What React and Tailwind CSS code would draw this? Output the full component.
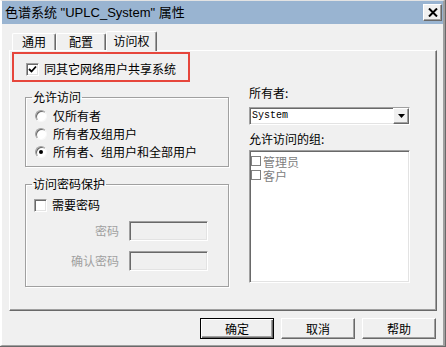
import { useState } from "react";

function CheckBox({ checked, onChange }) {
  return (
    <span
      onClick={onChange}
      className="w-[13px] h-[13px] shrink-0 bg-white border border-t-[#a0a0a0] border-l-[#a0a0a0] border-r-white border-b-white shadow-[inset_1px_1px_0_#696969,inset_-1px_-1px_0_#e3e3e3] flex items-center justify-center"
    >
      {checked && (
        <svg width="9" height="9" viewBox="0 0 9 9">
          <path d="M1 4 L3.5 6.5 L8 1.5" fill="none" stroke="#000" strokeWidth="1.8" />
        </svg>
      )}
    </span>
  );
}

function Radio({ checked, label, onClick }) {
  return (
    <div className="h-[18px] flex items-center gap-[6px] pl-[9px]" onClick={onClick}>
      <span className="w-[12px] h-[12px] rounded-full bg-white border border-t-[#a0a0a0] border-l-[#a0a0a0] border-r-[#f8f8f8] border-b-[#f8f8f8] shadow-[inset_1px_1px_0_#696969] flex items-center justify-center">
        {checked && <span className="w-[4px] h-[4px] rounded-full bg-black" />}
      </span>
      <span className="leading-[14px]">{label}</span>
    </div>
  );
}

const sunken =
  "border border-t-[#a0a0a0] border-l-[#a0a0a0] border-r-white border-b-white shadow-[inset_1px_1px_0_#696969,inset_-1px_-1px_0_#e3e3e3]";

export default function App() {
  const [share, setShare] = useState(true);
  const [access, setAccess] = useState(2);
  const [needPwd, setNeedPwd] = useState(false);

  const options = ["仅所有者", "所有者及组用户", "所有者、组用户和全部用户"];

  return (
    <div className="w-[446px] h-[347px] bg-[#f0f0f0] border-r border-b border-[#696969] font-['Noto_Sans_CJK_SC',sans-serif] text-[12px] text-black">
      <div className="h-full border-t border-l-2 border-t-[#e3e3e3] border-l-white border-r-2 border-b border-r-[#a0a0a0] border-b-[#a0a0a0] flex flex-col">
        {/* Title bar */}
        <div className="h-[23px] bg-[#99b4d1] flex items-center justify-between pl-[3px] pr-[1px]">
          <span className="text-[13px] leading-[16px] font-['Liberation_Sans','Noto_Sans_CJK_SC',sans-serif]">
            色谱系统 "UPLC_System" 属性
          </span>
          <button className="w-[19px] h-[17px] bg-[#f0f0f0] border border-t-white border-l-white border-r-[#696969] border-b-[#696969] shadow-[inset_-1px_-1px_0_#a0a0a0] flex items-center justify-center">
            <svg width="10" height="9" viewBox="0 0 10 9">
              <path d="M1 0.5 L9 8.5 M9 0.5 L1 8.5" stroke="#000" strokeWidth="2" />
            </svg>
          </button>
        </div>

        {/* Body */}
        <div className="pl-[7px] pt-[7px]">
          {/* Tabs */}
          <div className="flex items-end pl-[3px] h-[19px]">
            <div className="w-[44px] h-[17px] border-t border-l border-r border-t-white border-l-white border-r-[#696969] rounded-t-[2px] shadow-[inset_-1px_0_0_#a0a0a0] flex items-center justify-center leading-[14px]">
              通用
            </div>
            <div className="w-[50px] h-[17px] border-t border-l border-r border-t-white border-l-white border-r-[#696969] rounded-t-[2px] shadow-[inset_-1px_0_0_#a0a0a0] flex items-center justify-center leading-[14px]">
              配置
            </div>
            <div className="relative z-10 -mb-px w-[51px] h-[20px] bg-[#f0f0f0] border-t border-l border-r border-t-white border-l-white border-r-[#696969] rounded-t-[2px] shadow-[inset_-1px_0_0_#a0a0a0] flex items-center justify-center leading-[14px] pb-[1px]">
              访问权
            </div>
          </div>

          {/* Panel */}
          <div className="w-[428px] h-[261px] border border-t-white border-l-white border-r-[#696969] border-b-[#696969] shadow-[inset_-1px_-1px_0_#a0a0a0]">
            <div className="ml-[2px] mt-[1px] w-[178px] h-[30px] border-2 border-[#e6463c] flex items-center pt-[4px] pl-[12px] gap-[5px]">
              <CheckBox checked={share} onChange={() => setShare(!share)} />
              <span className="leading-[14px]">同其它网络用户共享系统</span>
            </div>

            <div className="flex mt-[4px] ml-[15px]">
              {/* Left column */}
              <div className="w-[204px] flex flex-col">
                <fieldset className="mt-[4px] h-[77px] border border-[#a0a0a0] shadow-[inset_1px_1px_0_#fff,1px_1px_0_#fff]">
                  <legend className="ml-[6px] px-[1px] leading-[14px]">允许访问</legend>
                  <div className="pt-[3px]">
                    {options.map((o, i) => (
                      <Radio key={o} label={o} checked={access === i} onClick={() => setAccess(i)} />
                    ))}
                  </div>
                </fieldset>

                <fieldset className="mt-[10px] h-[110px] border border-[#a0a0a0] shadow-[inset_1px_1px_0_#fff,1px_1px_0_#fff]">
                  <legend className="ml-[6px] px-[1px] leading-[14px]">访问密码保护</legend>
                  <div className="pt-[5px] pl-[8px] h-[23px] flex items-center gap-[5px]">
                    <CheckBox checked={needPwd} onChange={() => setNeedPwd(!needPwd)} />
                    <span className="leading-[14px]">需要密码</span>
                  </div>
                  <div className="mt-[7px] flex items-center justify-end pr-[20px] gap-[10px]">
                    <span className="text-[#a0a0a0] leading-[14px]">密码</span>
                    <div className={`w-[79px] h-[20px] bg-[#f0f0f0] ${sunken}`} />
                  </div>
                  <div className="mt-[10px] flex items-center justify-end pr-[20px] gap-[10px]">
                    <span className="text-[#a0a0a0] leading-[14px]">确认密码</span>
                    <div className={`w-[79px] h-[20px] bg-[#f0f0f0] ${sunken}`} />
                  </div>
                </fieldset>
              </div>

              {/* Right column */}
              <div className="ml-[20px] w-[161px] flex flex-col">
                <span className="leading-[14px]">所有者:</span>
                <div className={`mt-[7px] h-[18px] bg-white flex items-center justify-between ${sunken}`}>
                  <span className="pl-[2px] font-['Liberation_Mono',monospace] text-[10px] leading-[12px]">System</span>
                  <span className="w-[16px] h-[16px] bg-[#f0f0f0] border border-t-white border-l-white border-r-[#696969] border-b-[#696969] shadow-[inset_-1px_-1px_0_#a0a0a0] flex items-center justify-center">
                    <svg width="7" height="4" viewBox="0 0 7 4">
                      <path d="M0 0 H7 L3.5 4 Z" fill="#000" />
                    </svg>
                  </span>
                </div>
                <span className="mt-[7px] leading-[14px]">允许访问的组:</span>
                <div className={`mt-[4px] h-[133px] bg-white pt-[3px] pl-[1px] ${sunken}`}>
                  {["管理员", "客户"].map((g) => (
                    <div key={g} className="h-[14px] flex items-center gap-[2px] text-[#808080]">
                      <span className="w-[10px] h-[10px] border border-[#808080] bg-white" />
                      <span className="leading-[13px]">{g}</span>
                    </div>
                  ))}
                </div>
              </div>
            </div>
          </div>

          {/* Buttons */}
          <div className="mt-[7px] flex justify-end gap-[7px] pr-[7px]">
            <button className="w-[74px] h-[21px] bg-[#f0f0f0] border border-black shadow-[inset_1px_1px_0_#fff,inset_-1px_-1px_0_#696969,inset_-2px_-2px_0_#a0a0a0] leading-[14px]">
              确定
            </button>
            <button className="w-[74px] h-[21px] bg-[#f0f0f0] border border-t-white border-l-white border-r-[#696969] border-b-[#696969] shadow-[inset_-1px_-1px_0_#a0a0a0] leading-[14px]">
              取消
            </button>
            <button className="w-[74px] h-[21px] bg-[#f0f0f0] border border-t-white border-l-white border-r-[#696969] border-b-[#696969] shadow-[inset_-1px_-1px_0_#a0a0a0] leading-[14px]">
              帮助
            </button>
          </div>
        </div>
      </div>
    </div>
  );
}
